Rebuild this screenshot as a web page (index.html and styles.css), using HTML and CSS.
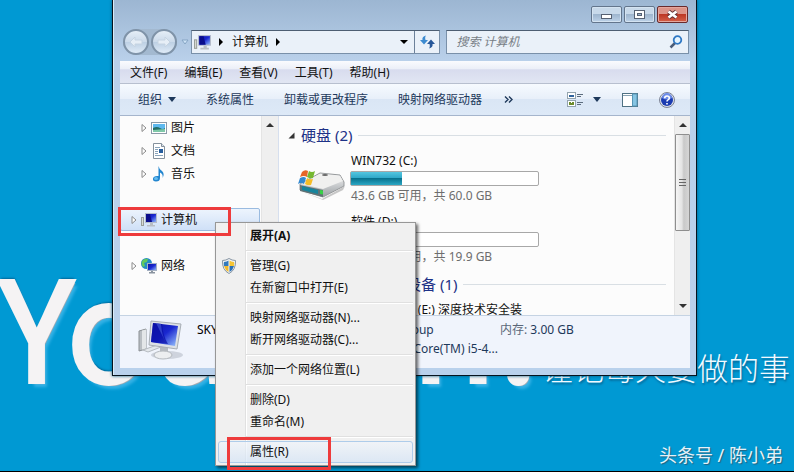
FILE: index.html
```html
<!doctype html>
<html lang="zh-CN">
  <head>
    <meta charset="UTF-8" />
    <meta name="viewport" content="width=device-width, initial-scale=1.0" />
    <title>计算机</title>
    <link rel="stylesheet" href="styles.css" />
  </head>
  <body>
    <!-- Shared icons -->
    <svg class="sprite" aria-hidden="true">
      <defs>
        <linearGradient id="screen" x1="0" y1="0" x2="1" y2="1">
          <stop offset="0" stop-color="#0c10a0" />
          <stop offset="0.5" stop-color="#1a28d0" />
          <stop offset="1" stop-color="#9cc8ff" />
        </linearGradient>
        <linearGradient id="metal" x1="0" y1="0" x2="0" y2="1">
          <stop offset="0" stop-color="#fafafa" />
          <stop offset="1" stop-color="#9a9fa3" />
        </linearGradient>
      </defs>
      <symbol id="icon-computer" viewBox="0 0 16 16">
        <rect x="0.5" y="5.5" width="2" height="8" fill="#d9dcd6" stroke="#9a9f9a" />
        <rect x="4.5" y="1.5" width="11" height="9" fill="url(#screen)" stroke="#b4bccb" />
        <path d="M5 2h4l2 8H5z" fill="#0a0d8c" />
        <path d="M9 11h3v2h2v1.500H6V13h3z" fill="#b9bec4" />
      </symbol>
      <symbol id="icon-arrow" viewBox="0 0 6 10">
        <path d="M1 1.500L5 5L1 8.500z" fill="#fff" stroke="#8b8b8b" />
      </symbol>
    </svg>

    <div class="desktop">
      <div class="wallpaper-title">You can!</div>
      <div class="wallpaper-note">谨记每天要做的事</div>
      <div class="watermark">头条号 / 陈小弟</div>

      <!-- Explorer window -->
      <main class="window">
        <div class="window-buttons">
          <button class="window-button" aria-label="最小化">
            <svg width="29" height="15" viewBox="0 0 29 15"><rect x="9.500" y="7.500" width="10" height="4" fill="#fff" stroke="#566173" /></svg>
          </button>
          <button class="window-button" aria-label="最大化">
            <svg width="29" height="15" viewBox="0 0 29 15"><rect x="9.500" y="3.500" width="10" height="8" fill="#fff" stroke="#566173" /><rect x="12.500" y="6.500" width="4" height="2" fill="#9db4ce" stroke="#566173" /></svg>
          </button>
          <button class="window-button close" aria-label="关闭">
            <svg width="29" height="15" viewBox="0 0 29 15"><path d="M10.500 4.500l8 6M18.500 4.500l-8 6" stroke="#5d3034" stroke-width="4.500" /><path d="M10.500 4.500l8 6M18.500 4.500l-8 6" stroke="#fff" stroke-width="2.800" /></svg>
          </button>
        </div>

        <!-- Address row -->
        <div class="address-row">
          <div class="history">
            <div class="history-pill">
              <button class="round" aria-label="后退">
                <svg width="14" height="12" viewBox="0 0 14 12"><path d="M6 1L1 6l5 5V8h7V4H6z" fill="#e6eef6" stroke="#c6d4e2" /></svg>
              </button>
              <button class="round" aria-label="前进">
                <svg width="14" height="12" viewBox="0 0 14 12"><path d="M8 1l5 5l-5 5V8H1V4h7z" fill="#e6eef6" stroke="#c6d4e2" /></svg>
              </button>
            </div>
            <svg width="8" height="6" viewBox="0 0 8 6"><path d="M1 1h6L4 5z" fill="#cfe4f7" stroke="#86a5c4" /></svg>
          </div>
          <div class="address">
            <svg width="17" height="17"><use href="#icon-computer" /></svg>
            <svg class="crumb" width="4" height="8" viewBox="0 0 4 8"><path d="M0 0l4 4l-4 4z" /></svg>
            <span>计算机</span>
            <svg class="crumb" width="4" height="8" viewBox="0 0 4 8"><path d="M0 0l4 4l-4 4z" /></svg>
            <button class="address-drop" aria-label="以前的位置">
              <svg width="8" height="4" viewBox="0 0 8 4"><path d="M0 0h8L4 4z" /></svg>
            </button>
            <button class="refresh" aria-label="刷新">
              <svg width="15" height="14" viewBox="0 0 15 14">
                <path d="M6 0.500C3 1 2 3 2.500 5H0L4 9.500L8 5H5.500C5 3 5 2 6 0.500z" fill="#3d8bd0" />
                <path d="M9 13.500c3-0.500 4-2.500 3.500-4.500H15L11 4.500L7 9h2.500c0.500 2 0.500 3-0.500 4.500z" fill="#27589a" />
              </svg>
            </button>
          </div>
          <label class="search">
            <input type="text" placeholder="搜索 计算机" aria-label="搜索 计算机" />
            <svg width="14" height="14" viewBox="0 0 14 14"><path d="M6 8L1.500 12.500" stroke="#4c5d78" stroke-width="2.500" /><circle cx="8.500" cy="5" r="3.800" fill="#e5f4ff" stroke="#2f78c4" stroke-width="1.800" /></svg>
          </label>
        </div>

        <!-- Menu bar -->
        <nav class="menu-bar">
          <button>文件(F)</button>
          <button>编辑(E)</button>
          <button>查看(V)</button>
          <button>工具(T)</button>
          <button>帮助(H)</button>
        </nav>

        <!-- Command bar -->
        <div class="toolbar">
          <button>组织 <svg width="8" height="5" viewBox="0 0 8 5"><path d="M0 0h8L4 5z" /></svg></button>
          <button>系统属性</button>
          <button>卸载或更改程序</button>
          <button>映射网络驱动器</button>
          <button class="more" aria-label="更多">
            <svg width="9" height="7" viewBox="0 0 9 7"><path d="M1 0.500l3 3l-3 3M5 0.500l3 3l-3 3" fill="none" stroke="#1e395b" stroke-width="1.400" /></svg>
          </button>
          <div class="toolbar-icons">
            <button class="view" aria-label="更改视图">
              <svg width="17" height="16" viewBox="0 0 17 16">
                <rect x="0.500" y="0.500" width="8" height="6" fill="#fff" stroke="#93a4ae" />
                <rect x="2" y="3" width="5" height="2" fill="#2f639c" />
                <rect x="0.500" y="8.500" width="8" height="6" fill="#fff" stroke="#93a4ae" />
                <path d="M2 10h2v1h1v-1h2v3H2z" fill="#6c8b2a" />
                <path d="M10 2.500h6M10 4.500h4M10 10.500h6M10 12.500h4" stroke="#5d6d7e" />
              </svg>
              <svg width="8" height="5" viewBox="0 0 8 5"><path d="M0 0h8L4 5z" /></svg>
            </button>
            <button aria-label="显示预览窗格">
              <svg width="16" height="14" viewBox="0 0 16 14"><rect x="0.500" y="0.500" width="15" height="13" fill="#fff" stroke="#4f7183" /><path d="M1 2.500h10" stroke="#88a3b4" /><rect x="10.500" y="1" width="4.500" height="12" fill="#86c5e3" stroke="#5695b5" /></svg>
            </button>
            <button aria-label="获取帮助">
              <svg width="16" height="16" viewBox="0 0 16 16"><circle cx="8" cy="8" r="7.500" fill="#dce0ea" stroke="#7c8394" /><circle cx="8" cy="8" r="6" fill="#1b3bb0" /><path d="M3 6a5 5 0 0 1 10 0q-5 3-10 0z" fill="#6d8ce8" /><path d="M5.700 6.300q0-2.300 2.300-2.300t2.300 2q0 1.200-1.300 1.900q-1 0.500-1 1.600M8 11v1.500" fill="none" stroke="#fff" stroke-width="1.600" /></svg>
            </button>
          </div>
        </div>

        <div class="panes">
          <!-- Navigation tree -->
          <aside class="tree">
            <ul class="tree-list">
              <li class="child">
                <svg class="expand" width="6" height="10"><use href="#icon-arrow" /></svg>
                <svg width="16" height="16" viewBox="0 0 16 16"><rect x="0.500" y="2.500" width="15" height="11" fill="#fff" stroke="#8b9aa8" /><rect x="2" y="4" width="12" height="8" fill="#5eb9ef" /><path d="M2 8q4-2 7 0t5 0v4H2z" fill="#236e68" /><path d="M2 10l12-1v3H2z" fill="#7fc8a8" /></svg>
                图片
              </li>
              <li class="child">
                <svg class="expand" width="6" height="10"><use href="#icon-arrow" /></svg>
                <svg width="16" height="16" viewBox="0 0 16 16"><path d="M2.500 0.500h8l3 3v12h-11z" fill="#fff" stroke="#85919c" /><path d="M10.500 0.500v3h3" fill="#dce4ec" stroke="#85919c" /><path d="M4 4.500h5M4 6.500h3M4 8.500h3M4 10.500h3M4 12.500h8" stroke="#8aa4bb" /><rect x="8" y="6" width="4" height="4" fill="#265d9d" /></svg>
                文档
              </li>
              <li class="child">
                <svg class="expand" width="6" height="10"><use href="#icon-arrow" /></svg>
                <svg width="16" height="16" viewBox="0 0 16 16"><path d="M7.500 0q0.500 3 3.500 5q3 3 0.500 7q1-4-2.500-5.500V12q0 3.500-4 3.500Q1.500 15.500 2 12.500q0.500-3 5.500-2.500z" fill="#2386cf" /><ellipse cx="5" cy="12.500" rx="2" ry="1.500" fill="#66bdf0" /></svg>
                音乐
              </li>
              <li class="root selected">
                <svg class="expand" width="6" height="10"><use href="#icon-arrow" /></svg>
                <svg width="16" height="16"><use href="#icon-computer" /></svg>
                计算机
              </li>
              <li class="root">
                <svg class="expand" width="6" height="10"><use href="#icon-arrow" /></svg>
                <svg width="16" height="16" viewBox="0 0 16 16"><circle cx="5.500" cy="5.500" r="5.500" fill="#238ac7" /><path d="M2 2q3-2 5-1l-1 3l-3 1l1 3l-2 1Q-1 5 2 2z" fill="#63c85c" /><rect x="6.500" y="5.500" width="9" height="7" fill="url(#screen)" stroke="#a4b0c2" /><path d="M10 13h2v1h2v1.500H8V14h2z" fill="#8a949f" /></svg>
                网络
              </li>
            </ul>
            <div class="scrollbar plain">
              <svg width="8" height="4" viewBox="0 0 8 4"><path d="M4 0l4 4H0z" /></svg>
            </div>
          </aside>

          <!-- Drives -->
          <section class="content">
            <div class="drives">
              <h2>
                <svg width="7" height="7" viewBox="0 0 7 7"><path d="M6.500 0.500v6h-6z" fill="#333" /></svg>
                硬盘 (2)
              </h2>
              <div class="drive">
                <svg class="drive-icon" width="48" height="30" viewBox="0 0 48 30">
                  <path d="M2 21L24 29L47 16L45 20L25 30z" fill="#777" opacity="0.4" />
                  <path d="M2 14L22 3L42 5L46 12V16L25 27L2 20z" fill="url(#metal)" stroke="#96999b" />
                  <path d="M3 14L22 4L42 6L45 11L25 19z" fill="#f0f0ef" />
                  <path d="M2 15L25 20V27L2 21z" fill="#617275" />
                  <path d="M4 16L20 20V24L4 20z" fill="#16839b" />
                  <path d="M22 20l3 0.500v4L22 24z" fill="#38d247" />
                  <ellipse cx="27" cy="5" rx="3" ry="1" fill="#666" />
                  <path d="M4 2q3-3 6-1L9 7Q6 5 2 7z" fill="#e66528" />
                  <path d="M11 1q3 2 6 0l-2 7q-3 1-6-1z" fill="#76b832" />
                  <path d="M2 8q4-2 6 0l-2 6q-3-2-6 0z" fill="#3388cf" />
                  <path d="M9 8q3 2 6 1l-2 6q-3 1-6-1z" fill="#f5bd27" />
                </svg>
                <div class="drive-info">
                  <div class="drive-name">WIN732 (C:)</div>
                  <div class="capacity"><div class="used" style="width: 27.300%"></div></div>
                  <div class="free">43.6 GB 可用，共 60.0 GB</div>
                </div>
              </div>
              <div class="drive">
                <div class="drive-info">
                  <div class="drive-name">软件 (D:)</div>
                  <div class="capacity"></div>
                  <div class="free">19.8 GB 可用，共 19.9 GB</div>
                </div>
              </div>
              <h2>
                <svg width="7" height="7" viewBox="0 0 7 7"><path d="M6.500 0.500v6h-6z" fill="#333" /></svg>
                有可移动存储的设备 (1)
              </h2>
              <div class="drive">
                <div class="drive-info">
                  <div class="drive-name">DVD 驱动器 (E:) 深度技术安全装</div>
                </div>
              </div>
            </div>
            <div class="scrollbar">
              <svg width="8" height="4" viewBox="0 0 8 4"><path d="M4 0l4 4H0z" /></svg>
              <div class="thumb"></div>
              <svg class="down" width="8" height="4" viewBox="0 0 8 4"><path d="M0 0h8L4 4z" /></svg>
            </div>
          </section>
        </div>

        <!-- Details pane -->
        <footer class="details">
          <svg class="details-icon" width="46" height="42" viewBox="0 0 46 42">
            <ellipse cx="29" cy="35" rx="16" ry="4" fill="#9ba3ae" opacity="0.4" />
            <path d="M1 11l7-2v20l-7 2z" fill="#b8bdc2" stroke="#8c9195" />
            <path d="M4 10.500l4-1v19l-4 1z" fill="#e3e6e8" />
            <path d="M5 30l14-5l4 2l-13 5z" fill="#e4e8ec" stroke="#b5bac0" />
            <path d="M22 26h8v8h-8z" fill="#b4bac0" />
            <ellipse cx="25" cy="35" rx="9" ry="4" fill="#eceef0" stroke="#b4b9be" />
            <path d="M13 1l30 3l-4 25l-28-4z" fill="#dde1e5" stroke="#a8aeb5" />
            <path d="M15 3l25 3l-3 20l-24-4z" fill="url(#screen)" />
            <path d="M15 3l9 1q1 12 6 20l-17-2z" fill="#0a10a6" opacity="0.700" />
            <path d="M18 3l5 1q1 12 5 19z" fill="#536de6" opacity="0.500" />
          </svg>
          <div class="details-grid">
            <span class="pc-name">SKY</span>
            <span class="label">工作组:</span>
            <span>Workgroup</span>
            <span class="memory"><span class="label">内存:</span> 3.00 GB</span>
            <span class="label row-two">处理器:</span>
            <span>Intel(R) Core(TM) i5-4...</span>
          </div>
        </footer>
      </main>

      <!-- Context menu -->
      <div class="context-menu" role="menu">
        <button class="default" role="menuitem">展开(A)</button>
        <hr />
        <button role="menuitem">
          <svg class="menu-icon" width="16" height="16" viewBox="0 0 16 16">
            <path d="M8 0.500Q11 2.500 14.500 2.500Q15 12 8 15.500Q1 12 1.500 2.500Q5 2.500 8 0.500z" fill="#f4f6f8" stroke="#8594a2" />
            <path d="M7.500 2.500V8H3Q2.500 6 3 4Q6 3.500 7.500 2.500z" fill="#3279bd" />
            <path d="M8.500 2.500V8H13Q13.500 6 13 4Q10 3.500 8.500 2.500z" fill="#f5c434" />
            <path d="M7.500 8v6Q4 12 3 8z" fill="#f1b92c" />
            <path d="M8.500 8v6Q12 12 13 8z" fill="#2a6fb4" />
          </svg>
          管理(G)
        </button>
        <button role="menuitem">在新窗口中打开(E)</button>
        <hr />
        <button role="menuitem">映射网络驱动器(N)...</button>
        <button role="menuitem">断开网络驱动器(C)...</button>
        <hr />
        <button role="menuitem">添加一个网络位置(L)</button>
        <hr />
        <button role="menuitem">删除(D)</button>
        <button role="menuitem">重命名(M)</button>
        <hr />
        <button class="hover" role="menuitem">属性(R)</button>
      </div>

      <!-- Step markers -->
      <div class="marker marker-computer"></div>
      <div class="marker marker-properties"></div>
    </div>
  </body>
</html>
```
FILE: styles.css
```css
/* General Styling */
* {
  box-sizing: border-box;
}

body {
  margin: 0;
  font-family: "Noto Sans", "Noto Sans CJK SC", sans-serif;
  font-size: 12px;
  line-height: 22px;
  color: #111;
}

button {
  margin: 0;
  padding: 0;
  border: none;
  background: none;
  color: inherit;
  font: inherit;
  white-space: nowrap;
}

svg {
  flex: none;
}

.sprite {
  position: absolute;
  width: 0;
  height: 0;
}

/* Desktop */
.desktop {
  position: relative;
  min-height: 100vh;
  overflow: hidden;
  background: #0099d3;
  border-bottom: 1px solid #000;
}

.wallpaper-title {
  position: absolute;
  left: 0;
  top: 249px;
  font-family: "Noto Sans CJK SC", sans-serif;
  font-size: 138px;
  line-height: 146px;
  font-weight: 400;
  -webkit-text-stroke: 4px #f5f3f4;
  color: #f5f3f4;
  white-space: nowrap;
  text-shadow: 2px 2px 1px #b9a9a9, 4px 5px 3px #35b2e6, 1px -3px 2px #00689a;
}

.wallpaper-note {
  position: absolute;
  right: 4px;
  top: 347px;
  font-family: "Noto Sans CJK SC", sans-serif;
  font-size: 31px;
  line-height: 40px;
  font-weight: 300;
  color: #f2faff;
  text-shadow: 1px 2px 2px #066c9c;
}

.watermark {
  position: absolute;
  right: 11px;
  bottom: 4px;
  font-size: 18px;
  line-height: 24px;
  color: #e4f2f9;
  text-shadow: 1px 1px 1px #24617c;
}

/* Window */
.window {
  position: relative;
  margin: 0 97px 0 112px;
  padding: 0 6px 7px 7px;
  border: 1px solid #06141f;
  border-top: none;
  background: linear-gradient(#9cb6d2, #b9d0ea 60px, #b9d1ec);
  box-shadow: inset 1px 0 #d8ecf8, 0 0 3px #05577b;
}

.window-buttons {
  display: flex;
  justify-content: flex-end;
  gap: 2px;
  height: 29px;
  padding: 6px 2px 0 0;
}

.window-button {
  display: flex;
  width: 31px;
  height: 17px;
  border: 1px solid #63758c;
  border-radius: 2px;
  background: linear-gradient(#c8d9ea 50%, #9fb6cf 50%, #bdd2e8);
  box-shadow: inset 0 0 0 1px #d4e3f1;
}

.window-button.close {
  border-color: #692a2c;
  background: linear-gradient(#dc9489 50%, #bd3825 50%, #d4614a);
  box-shadow: inset 0 0 0 1px #e5a79e;
}

/* Address row */
.address-row {
  display: flex;
  align-items: center;
  height: 32px;
  padding: 0 1px 6px 3px;
}

.history {
  display: flex;
  align-items: center;
  gap: 4px;
  width: 68px;
}

.history-pill {
  display: flex;
  gap: 2px;
  border-radius: 13px;
  background: #a3b9d0;
}

.round {
  display: flex;
  align-items: center;
  justify-content: center;
  width: 26px;
  height: 26px;
  border: 2px solid #7f93a8;
  border-radius: 50%;
  background: linear-gradient(#e5eef7, #cbdaea 50%, #bccfe3 50%, #dfebf7);
}

.address,
.search {
  display: flex;
  align-items: center;
  height: 24px;
  border: 1px solid #7990a9;
  border-top-color: #4d5e72;
  background: #eaf1f9;
}

.address {
  flex: 250;
  min-width: 0;
  margin-right: 6px;
  padding-left: 2px;
}

.crumb {
  margin: 0 9px 0 8px;
}

.address-drop {
  display: flex;
  align-items: center;
  margin-left: auto;
  padding: 0 6px;
  height: 22px;
}

.refresh {
  display: flex;
  align-items: center;
  justify-content: center;
  width: 25px;
  height: 22px;
  border-left: 1px solid #6c819a;
}

.search {
  flex: 240;
  min-width: 0;
  padding-right: 5px;
}

.search input {
  flex: 1;
  min-width: 0;
  padding: 0 0 0 9px;
  border: none;
  background: none;
  font: inherit;
  font-style: italic;
}

.search input::placeholder {
  color: #777e86;
  opacity: 1;
}

/* Menu bar */
.menu-bar {
  display: flex;
  gap: 17px;
  height: 23px;
  padding: 1px 0 0 10px;
  border-bottom: 1px solid #b7bfcf;
  background: linear-gradient(#fafbfe, #eceff8 35%, #d8dcee 40%, #e1e6f3);
}

/* Command bar */
.toolbar {
  display: flex;
  align-items: center;
  gap: 30px;
  height: 32px;
  padding: 0 15px 0 18px;
  border-bottom: 1px solid #a5b5cc;
  background: linear-gradient(#f6faff, #e7eff9 50%, #dae6f5 50%, #dde9f7);
  color: #1e395b;
  fill: #1e395b;
}

.toolbar button {
  display: flex;
  align-items: center;
  gap: 6px;
}

.toolbar .more {
  margin-left: -8px;
}

.toolbar-icons {
  display: flex;
  align-items: center;
  gap: 21px;
  margin-left: auto;
}

.toolbar .view {
  gap: 9px;
}

/* Panes */
.panes {
  display: flex;
  height: 199px;
  overflow: hidden;
  background: #fcfcfc;
}

.tree {
  display: flex;
  width: 159px;
  border-right: 1px solid #d6dfee;
}

.tree-list {
  flex: 1;
  margin: 0;
  padding: 0;
  list-style: none;
}

.tree-list li {
  display: flex;
  align-items: center;
  gap: 4px;
  height: 23px;
  border: 1px solid transparent;
}

.tree-list .child {
  padding-left: 20px;
}

.tree-list .root {
  margin-top: 23px;
  padding-left: 10px;
}

.tree-list .selected {
  border-color: #9abbe0;
  border-radius: 2px;
  background: linear-gradient(#edf4fd, #cfe0f7);
}

.scrollbar {
  display: flex;
  flex-direction: column;
  align-items: center;
  width: 16px;
  padding: 7px 0;
  background: #efefef;
  border-left: 1px solid #e4e4e4;
  fill: #333;
}

.scrollbar.plain {
  width: 17px;
  margin-left: 1px;
}

.thumb {
  display: flex;
  width: 15px;
  height: 97px;
  margin-top: 7px;
  border: 1px solid #8e8e8e;
  border-radius: 1px;
  background:
    repeating-linear-gradient(#666 0 1px, transparent 1px 3px) center / 7px 7px no-repeat,
    linear-gradient(to right, #f5f5f5, #e4e4e4 45%, #c9c9c9 60%, #d6d6d6);
}

.scrollbar .down {
  margin-top: auto;
}

.content {
  display: flex;
  flex: 1;
  min-width: 0;
}

.drives {
  flex: 1;
  min-width: 0;
  padding: 8px 8px 0 9px;
}

.drives h2 {
  display: flex;
  align-items: center;
  gap: 6px;
  margin: 0;
  font-size: 15px;
  line-height: 22px;
  font-weight: 400;
  color: #1e3287;
}

.drives h2::after {
  content: "";
  flex: 1;
  height: 1px;
  background: #d9dfe4;
}

.drive {
  position: relative;
  height: 61px;
  padding-left: 62px;
}

.drives h2 + .drive {
  margin-top: 5px;
}

.drive-icon {
  position: absolute;
  left: 10px;
  top: 19px;
}

.drive-name {
  padding-left: 1px;
  line-height: 20px;
}

.capacity {
  width: 189px;
  height: 15px;
  border: 1px solid #a8a8a8;
  border-radius: 2px;
  background: #fff;
}

.used {
  height: 13px;
  background: linear-gradient(#54c6e0, #30a8c8 45%, #08728e 50%, #2ba7c4);
}

.free {
  padding-left: 1px;
  line-height: 20px;
  color: #6d6d6d;
}

/* Details pane */
.details {
  display: flex;
  height: 53px;
  padding: 4px 0 0 18px;
  border-top: 1px solid #c5d3e3;
  background: #f0f4fc;
  color: #1e395b;
}

.details-grid {
  display: grid;
  grid-template-columns: 130px 43px 130px 1fr;
  grid-auto-rows: 19px;
  flex: 1;
  margin-left: 13px;
  line-height: 19px;
  white-space: nowrap;
}

.pc-name {
  color: #000;
}

.label {
  color: #5a6779;
}

.row-two {
  grid-column: 2;
}

/* Context menu */
.context-menu {
  position: absolute;
  left: 215px;
  top: 222px;
  width: 201px;
  padding: 2px;
  border: 1px solid #979797;
  background: linear-gradient(to right, #f0f0f0 29px, #e0e0e0 29px 30px, #fff 30px 31px, #f0f0f0 31px);
  box-shadow: 2px 2px 3px rgba(0, 0, 0, 0.6);
}

.context-menu button {
  display: block;
  position: relative;
  width: 100%;
  height: 22px;
  padding-left: 31px;
  border: 1px solid transparent;
  border-radius: 3px;
  line-height: 20px;
  text-align: left;
}

.context-menu .default {
  font-weight: 700;
}

.context-menu .hover {
  border-color: #aeccea;
  background: linear-gradient(rgba(240, 245, 252, 0.6), rgba(212, 228, 246, 0.7));
}

.context-menu hr {
  height: 2px;
  margin: 3px 0 3px 28px;
  border: none;
  border-top: 1px solid #e0e0e0;
  border-bottom: 1px solid #fff;
}

.menu-icon {
  position: absolute;
  left: 2px;
  top: 2px;
}

/* Step markers */
.marker {
  position: absolute;
  border: 3px solid #ee3b3c;
}

.marker-computer {
  left: 118px;
  top: 207px;
  width: 113px;
  height: 29px;
}

.marker-properties {
  left: 227px;
  top: 437px;
  width: 104px;
  height: 33px;
}
```
